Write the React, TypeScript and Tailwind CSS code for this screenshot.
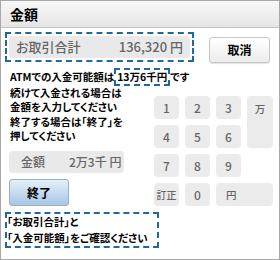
import React from 'react';

const keys = [
  { label: '1' },
  { label: '2' },
  { label: '3' },
  { label: '万', tall: true },
  { label: '4' },
  { label: '5' },
  { label: '6' },
  { label: '7' },
  { label: '8' },
  { label: '9' },
  { label: '', blank: true },
  { label: '訂正', small: true },
  { label: '0' },
  { label: '円', wide: true },
];

export default function App() {
  return (
    <div
      className="w-[280px] h-[260px] bg-white border border-[#a9a9a9] flex flex-col text-black"
      style={{ fontFamily: '"Noto Sans CJK JP", "Noto Sans", sans-serif' }}
    >
      {/* header */}
      <div className="h-[27px] shrink-0 bg-gradient-to-b from-[#f8f8f8] to-[#e5e5e5] border-b border-[#c4c4c4] flex items-center pl-[9px]">
        <span className="text-[14px] font-bold leading-none">金額</span>
      </div>

      <div className="px-[4px] pt-[4px] [font-feature-settings:'palt']">
        {/* total row */}
        <div className="flex items-start">
          <div className="w-[189px] h-[30px] border-2 border-dashed border-[#1f68a0] p-[2px]">
            <div className="h-full rounded-[3px] bg-[#e9e9e9] flex items-center justify-between pl-[7px] pr-[7px] text-[13px] text-[#666] font-medium">
              <span>お取引合計</span>
              <span>136,320 円</span>
            </div>
          </div>
          <button className="ml-[15px] mt-[5px] w-[61px] h-[26px] rounded-[3px] border border-[#c6c6c6] bg-gradient-to-b from-white to-[#ececec] text-[12px] font-bold leading-none shadow-[0_1px_1px_rgba(0,0,0,0.12)]">
            取消
          </button>
        </div>

        {/* main grid */}
        <div className="grid grid-cols-[144px_1fr] mt-[5px]">
          <div className="flex flex-col">
            <div className="text-[10.5px] font-bold whitespace-nowrap pl-[5px]">
              <div className="h-[18px] flex items-center">
                <span>ATMでの入金可能額は</span>
                <span className="h-[18px] flex items-center border-2 border-dashed border-[#1f68a0] px-[1px]">13万6千円</span>
                <span>です</span>
              </div>
              <div className="leading-[14.3px]">
                <div>続けて入金される場合は</div>
                <div>金額を入力してください</div>
                <div>終了する場合は「終了」を</div>
                <div>押してください</div>
              </div>
            </div>
            <div className="mt-[8px] ml-[4px] w-[115px] h-[22px] rounded-[4px] bg-[#e9e9e9] flex items-center text-[12px] text-[#666] font-medium">
              <span className="ml-[12px]">金額</span>
              <span className="ml-[24px]">2万3千 円</span>
            </div>
            <button className="mt-[6px] ml-[4px] w-[60px] h-[27px] rounded-[3px] border border-[#93afcc] bg-gradient-to-b from-[#e6eff9] to-[#a9c6e5] text-[12px] font-bold leading-none">
              終了
            </button>
          </div>

          <div className="grid grid-cols-[25px_25px_25px_26px] grid-rows-[23px_23px_23px_23px] gap-x-[6px] gap-y-[6px] mt-[28px] ml-[5px] text-[#666] text-[12px] font-medium">
            {keys.map((k, i) =>
              k.blank ? (
                <div key={i} />
              ) : (
                <div
                  key={i}
                  className={`rounded-[4px] bg-[#ebebeb] flex ${k.tall ? 'row-span-2 items-start pt-[5px]' : 'items-center'} ${
                    k.wide ? 'col-span-2 justify-start pl-[10px]' : 'justify-center'
                  } ${k.small ? 'text-[10px]' : ''} ${k.tall || k.wide ? 'text-[10.5px]' : ''}`}
                >
                  {k.label}
                </div>
              )
            )}
          </div>
        </div>

        {/* note */}
        <div className="mt-[6px] w-[154px] h-[36px] border-2 border-dashed border-[#1f68a0] flex flex-col justify-center text-[10.5px] font-bold leading-[16px] whitespace-nowrap">
          <span>「お取引合計」と</span>
          <span>「入金可能額」をご確認ください</span>
        </div>
      </div>
    </div>
  );
}
